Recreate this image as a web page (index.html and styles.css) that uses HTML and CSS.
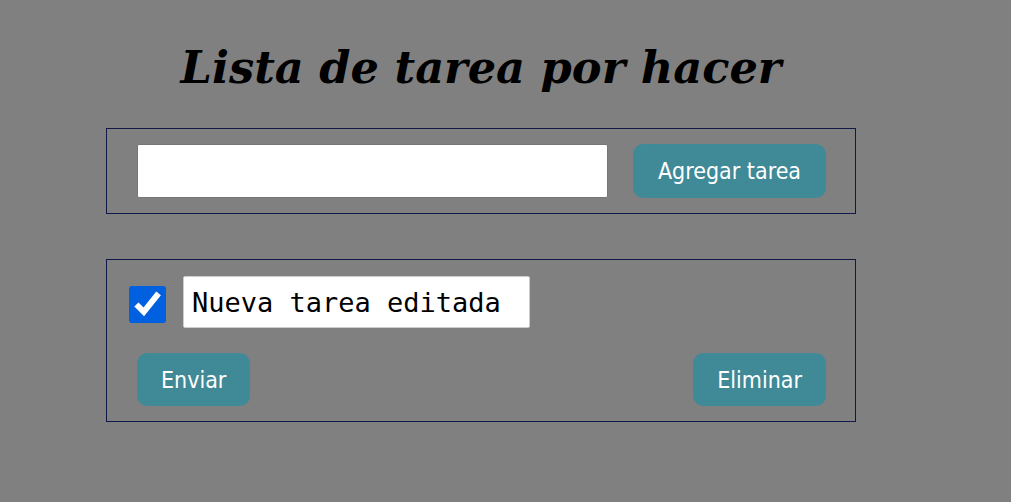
FILE: index.html
```html
<!DOCTYPE html>
<html lang="es">
<head>
<meta charset="utf-8">
<title>Lista de tarea por hacer</title>
<link rel="stylesheet" href="styles.css">
</head>
<body>
<main class="app">
  <h1 class="title">Lista de tarea por hacer</h1>
  <form class="panel add-panel">
    <input class="task-input" type="text">
    <button class="btn btn-add" type="button">Agregar tarea</button>
  </form>
  <section class="panel task">
    <div class="task-row">
      <input class="task-check" type="checkbox" checked>
      <input class="task-edit" type="text" value="Nueva tarea editada">
    </div>
    <div class="task-actions">
      <button class="btn" type="button">Enviar</button>
      <button class="btn" type="button">Eliminar</button>
    </div>
  </section>
</main>
</body>
</html>
```
FILE: styles.css
```css
html, body {
  margin: 0;
  padding: 0;
  background: #808080;
}
.app {
  width: 750px;
  margin-left: 106px;
  padding-top: 34px;
}
.title {
  margin: 0 0 26px;
  text-align: center;
  font-family: "DejaVu Serif", serif;
  font-style: italic;
  font-weight: bold;
  font-size: 44.7px;
  line-height: 68px;
  color: #000;
}
.panel {
  border: 1px solid #101848;
  box-sizing: border-box;
}
.add-panel {
  display: flex;
  align-items: center;
  gap: 25px;
  padding: 15px 29px 15px 30px;
  margin: 0 0 45px;
}
.task-input {
  width: 471px;
  height: 54px;
  box-sizing: border-box;
  border: 1px solid #767676;
  border-radius: 2px;
  background: #fff;
  margin: 0;
}
.btn {
  font-family: "DejaVu Sans Condensed", "DejaVu Sans", sans-serif;
  font-size: 23px;
  color: #fff;
  background: #3f8a96;
  border: none;
  border-radius: 10px;
  height: 53px;
  padding: 0 24px;
  margin: 0;
}
.btn-add {
  width: 193px;
  height: 54px;
  padding: 0;
}
.task {
  padding: 16px 29px 15px 22px;
}
.task-row {
  display: flex;
  align-items: center;
  gap: 17px;
}
.task-check {
  width: 37px;
  height: 37px;
  margin: 5px 0 0;
  accent-color: #0060df;
}
.task-edit {
  width: 347px;
  height: 52px;
  box-sizing: border-box;
  border: 1px solid #ccc;
  border-radius: 2px;
  background: #fff;
  font-family: "DejaVu Sans Mono", monospace;
  font-size: 27px;
  padding: 0 8px;
  margin: 0;
  color: #000;
}
.task-actions {
  display: flex;
  justify-content: space-between;
  margin-top: 25px;
  padding-left: 8px;
}
```
